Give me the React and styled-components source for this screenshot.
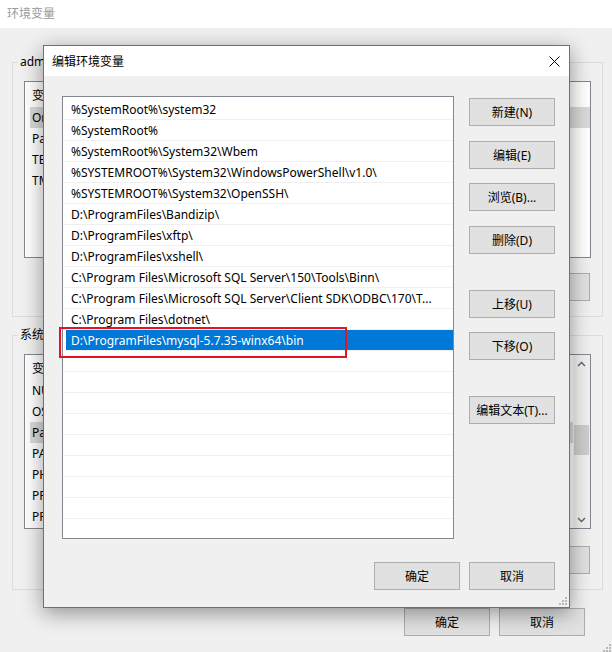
import styled, { createGlobalStyle } from "styled-components"

const FONT = `"Noto Sans", "Noto Sans CJK SC", sans-serif`

const paths = [
  "%SystemRoot%\\system32",
  "%SystemRoot%",
  "%SystemRoot%\\System32\\Wbem",
  "%SYSTEMROOT%\\System32\\WindowsPowerShell\\v1.0\\",
  "%SYSTEMROOT%\\System32\\OpenSSH\\",
  "D:\\ProgramFiles\\Bandizip\\",
  "D:\\ProgramFiles\\xftp\\",
  "D:\\ProgramFiles\\xshell\\",
  "C:\\Program Files\\Microsoft SQL Server\\150\\Tools\\Binn\\",
  "C:\\Program Files\\Microsoft SQL Server\\Client SDK\\ODBC\\170\\T...",
  "C:\\Program Files\\dotnet\\",
  "D:\\ProgramFiles\\mysql-5.7.35-winx64\\bin",
]
const SELECTED = 11
const TOTAL_ROWS = 21

// only the first letters of these peek out from under the dialog
const userVars = ["OneDrive", "Path", "TEMP", "TMP"]
const systemVars = ["NUMBER_OF_PROCESSORS", "OS", "Path", "PATHEXT", "PHP_HOME", "PROCESSOR_ARCHITECTURE", "PROCESSOR_LEVEL"]

function App() {
  return (
    <Window>
      <GlobalStyle />
      <TitleBar $inactive>环境变量</TitleBar>
      <WindowBody>
        <Group>
          <Legend>admin 的用户变量</Legend>
          <VarList $h={177}>
            <VarColumn>
              <VarHeader>
                <NameCell>变量</NameCell>
              </VarHeader>
              {userVars.map((n, i) => (
                <VarRow key={n} $selected={i === 0}>
                  <NameCell>{n}</NameCell>
                </VarRow>
              ))}
            </VarColumn>
          </VarList>
          <ButtonRow $top={15}>
            <Button>新建(N)...</Button>
            <Button>编辑(E)...</Button>
            <Button>删除(D)</Button>
          </ButtonRow>
        </Group>
        <Group>
          <Legend>系统变量(S)</Legend>
          <VarList $h={175}>
            <VarColumn>
              <VarHeader>
                <NameCell>变量</NameCell>
              </VarHeader>
              {systemVars.map((n, i) => (
                <VarRow key={n + i} $selected={i === 2}>
                  <NameCell>{n}</NameCell>
                </VarRow>
              ))}
            </VarColumn>
            <Scrollbar>
              <ScrollArrow>
                <Chevron up />
              </ScrollArrow>
              <ScrollTrack>
                <Thumb />
              </ScrollTrack>
              <ScrollArrow>
                <Chevron />
              </ScrollArrow>
            </Scrollbar>
          </VarList>
          <ButtonRow $top={17}>
            <Button>新建(W)...</Button>
            <Button>编辑(I)...</Button>
            <Button>删除(L)</Button>
          </ButtonRow>
        </Group>
        <Footer>
          <Button>确定</Button>
          <Button>取消</Button>
        </Footer>
      </WindowBody>
      <Grip $right={1} $bottom={0} />

      <Dialog>
        <DialogTitle>
          <span>编辑环境变量</span>
          <CloseIcon />
        </DialogTitle>
        <DialogBody>
          <PathFrame>
            <PathList>
              {Array.from({ length: TOTAL_ROWS }, (_, i) => (
                <PathRow key={i}>
                  <PathCell $selected={i === SELECTED}>{paths[i] || ""}</PathCell>
                </PathRow>
              ))}
            </PathList>
            <Mark />
          </PathFrame>
          <SideButtons>
            <Button $gap={2}>新建(N)</Button>
            <Button $gap={15}>编辑(E)</Button>
            <Button $gap={14}>浏览(B)...</Button>
            <Button $gap={15}>删除(D)</Button>
            <Button $gap={36}>上移(U)</Button>
            <Button $gap={14}>下移(O)</Button>
            <Button $gap={36}>编辑文本(T)...</Button>
          </SideButtons>
          <DialogFooter>
            <Button>确定</Button>
            <Button>取消</Button>
          </DialogFooter>
        </DialogBody>
        <Grip $right={2} $bottom={2} />
      </Dialog>
    </Window>
  )
}

export default App

function CloseIcon() {
  return (
    <svg width="11" height="11" viewBox="0 0 11 11">
      <path d="M0.5 0.5 L10.5 10.5 M10.5 0.5 L0.5 10.5" stroke="#000" strokeWidth="1" />
    </svg>
  )
}

function Chevron({ up }) {
  return (
    <svg width="9" height="6" viewBox="0 0 9 6">
      <path
        d={up ? "M1 5 L4.5 1.5 L8 5" : "M1 1 L4.5 4.5 L8 1"}
        stroke="#606060"
        strokeWidth="1.3"
        fill="none"
      />
    </svg>
  )
}

function Grip(props) {
  const dots = [
    [6, 0],
    [3, 3],
    [6, 3],
    [0, 6],
    [3, 6],
    [6, 6],
  ]
  return (
    <GripBox {...props}>
      <svg width="8" height="8" viewBox="0 0 8 8">
        {dots.map(([x, y]) => (
          <rect key={x + "-" + y} x={x} y={y} width="2" height="2" fill="#b9b9b9" />
        ))}
      </svg>
    </GripBox>
  )
}

const GlobalStyle = createGlobalStyle`
  html, body {
    margin: 0;
    padding: 0;
    background: #f0f0f0;
    overflow: hidden;
  }
  * { box-sizing: border-box; }
`

const Window = styled.div`
  position: relative;
  width: 612px;
  height: 652px;
  background: #f0f0f0;
  font-family: ${FONT};
  font-size: 12px;
  color: #000;
  display: flex;
  flex-direction: column;
  overflow: hidden;
`

const TitleBar = styled.div`
  height: 28px;
  flex-shrink: 0;
  background: #fff;
  display: flex;
  align-items: center;
  padding: 0 0 3px 7px;
  color: ${(p) => (p.$inactive ? "#9a9a9a" : "#000")};
`

const WindowBody = styled.div`
  display: flex;
  flex-direction: column;
  padding: 26px 9px 0 12px;
`

const Group = styled.fieldset`
  margin: 0;
  padding: 11px 11px 15px 11px;
  border: 1px solid #dcdcdc;
  min-width: 0;
  & + & {
    margin-top: 10px;
  }
`

const Legend = styled.legend`
  margin-left: -6px;
  padding: 0 2px;
  line-height: 16px;
`

const VarList = styled.div`
  height: ${(p) => p.$h}px;
  background: #fff;
  border: 1px solid #828790;
  display: flex;
  overflow: hidden;
`

const VarColumn = styled.div`
  flex: 1;
  display: flex;
  flex-direction: column;
  min-width: 0;
`

const VarHeader = styled.div`
  height: 25px;
  flex-shrink: 0;
  display: flex;
  align-items: center;
  padding-left: 7px;
`

const VarRow = styled.div`
  height: 21px;
  flex-shrink: 0;
  display: flex;
  align-items: center;
  margin-left: 5px;
  padding-left: 2px;
  white-space: nowrap;
  background: ${(p) => (p.$selected ? "#d9d9d9" : "transparent")};
`

const NameCell = styled.span`
  width: 200px;
  flex-shrink: 0;
`

const Scrollbar = styled.div`
  width: 17px;
  flex-shrink: 0;
  background: #f0f0f0;
  display: flex;
  flex-direction: column;
`

const ScrollArrow = styled.div`
  height: 17px;
  display: flex;
  align-items: center;
  justify-content: center;
`

const ScrollTrack = styled.div`
  flex: 1;
  padding: 53px 1px 0;
`

const Thumb = styled.div`
  height: 30px;
  background: #cdcdcd;
`

const ButtonRow = styled.div`
  display: flex;
  justify-content: flex-end;
  gap: 10px;
  margin-top: ${(p) => p.$top}px;
  padding-right: 1px;
`

const Button = styled.button`
  width: 86px;
  height: 28px;
  flex-shrink: 0;
  margin: ${(p) => (p.$gap ? `${p.$gap}px 0 0` : "0")};
  padding: 0;
  border: 1px solid #adadad;
  background: #e1e1e1;
  color: #000;
  font-family: ${FONT};
  font-size: 12px;
  display: flex;
  align-items: center;
  justify-content: center;
  white-space: nowrap;
`

const Footer = styled.div`
  display: flex;
  justify-content: flex-end;
  gap: 9px;
  margin-top: 18px;
  padding-right: 18px;
`

const GripBox = styled.div`
  position: absolute;
  right: ${(p) => p.$right}px;
  bottom: ${(p) => p.$bottom}px;
  width: 8px;
  height: 8px;
  display: flex;
`

const Dialog = styled.div`
  position: absolute;
  left: 43px;
  top: 45px;
  width: 527px;
  height: 563px;
  border: 1px solid #707070;
  background: #f0f0f0;
  box-shadow: 0 5px 20px rgba(0, 0, 0, 0.4);
  display: flex;
  flex-direction: column;
`

const DialogTitle = styled.div`
  height: 30px;
  flex-shrink: 0;
  background: #fff;
  display: flex;
  align-items: center;
  justify-content: space-between;
  padding: 0 9px 0 8px;
`

const DialogBody = styled.div`
  flex: 1;
  display: grid;
  grid-template-columns: 392px 86px;
  grid-template-rows: 443px auto;
  column-gap: 15px;
  row-gap: 23px;
  align-content: start;
  padding: 20px 14px 0 18px;
`

const PathFrame = styled.div`
  position: relative;
`

const PathList = styled.div`
  height: 443px;
  background: #fff;
  border: 1px solid #828790;
  padding-top: 2px;
  overflow: hidden;
`

const PathRow = styled.div`
  height: 21px;
  display: flex;
  border-bottom: 1px solid #efefef;
`

const PathCell = styled.div`
  flex: 1;
  min-width: 0;
  margin-left: 3px;
  padding-left: 5px;
  display: flex;
  align-items: center;
  white-space: nowrap;
  overflow: hidden;
  background: ${(p) => (p.$selected ? "#0078d7" : "transparent")};
  color: ${(p) => (p.$selected ? "#fff" : "#000")};
`

const Mark = styled.div`
  position: absolute;
  left: -3px;
  top: 231px;
  width: 288px;
  height: 31px;
  border: 2px solid #e3141e;
  pointer-events: none;
`

const SideButtons = styled.div`
  display: flex;
  flex-direction: column;
`

const DialogFooter = styled.div`
  grid-column: 1 / -1;
  display: flex;
  justify-content: flex-end;
  gap: 9px;
`
